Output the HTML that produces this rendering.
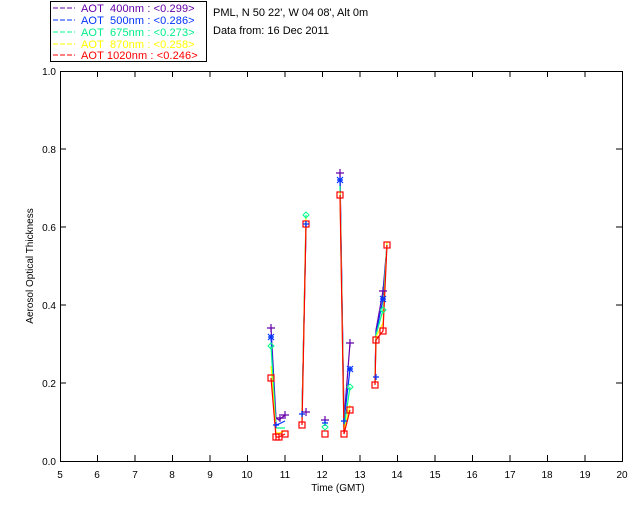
<!DOCTYPE html>
<html><head><style>
body{margin:0;background:#fff;width:640px;height:512px;overflow:hidden}
svg text{font-family:"Liberation Sans",sans-serif;font-size:11px}
</style></head><body>
<svg width="640" height="512" xmlns="http://www.w3.org/2000/svg">
<rect x="50.5" y="1.5" width="156" height="60" fill="none" stroke="#000"/>
<g stroke-dasharray="5,2" stroke-width="1">
<line x1="53" y1="8" x2="75" y2="8" stroke="#6600aa"/>
<line x1="53" y1="20" x2="75" y2="20" stroke="#0033ff"/>
<line x1="53" y1="32" x2="75" y2="32" stroke="#00ff88"/>
<line x1="53" y1="44" x2="75" y2="44" stroke="#ffff00"/>
<line x1="53" y1="55" x2="75" y2="55" stroke="#ff0000"/>
</g>
<g style="letter-spacing:0.1px">
<text x="81" y="12" fill="#6600aa" xml:space="preserve">AOT  400nm : &lt;0.299&gt;</text>
<text x="81" y="24" fill="#0033ff" xml:space="preserve">AOT  500nm : &lt;0.286&gt;</text>
<text x="81" y="36" fill="#00ee88" xml:space="preserve">AOT  675nm : &lt;0.273&gt;</text>
<text x="81" y="48" fill="#ffff00" xml:space="preserve">AOT  870nm : &lt;0.258&gt;</text>
<text x="81" y="59" fill="#ff0000" xml:space="preserve">AOT 1020nm : &lt;0.246&gt;</text>
</g>
<text x="213" y="16" fill="#000">PML, N 50 22', W 04 08', Alt 0m</text>
<text x="213" y="34" fill="#000">Data from: 16 Dec 2011</text>
<rect x="60.5" y="71.5" width="562" height="390" fill="none" stroke="#000"/>
<g stroke="#000">
<line x1="97.5" y1="71" x2="97.5" y2="77"/><line x1="97.5" y1="461" x2="97.5" y2="455"/>
<line x1="135" y1="71" x2="135" y2="77"/><line x1="135" y1="461" x2="135" y2="455"/>
<line x1="172.5" y1="71" x2="172.5" y2="77"/><line x1="172.5" y1="461" x2="172.5" y2="455"/>
<line x1="210" y1="71" x2="210" y2="77"/><line x1="210" y1="461" x2="210" y2="455"/>
<line x1="247.5" y1="71" x2="247.5" y2="77"/><line x1="247.5" y1="461" x2="247.5" y2="455"/>
<line x1="285" y1="71" x2="285" y2="77"/><line x1="285" y1="461" x2="285" y2="455"/>
<line x1="322.5" y1="71" x2="322.5" y2="77"/><line x1="322.5" y1="461" x2="322.5" y2="455"/>
<line x1="360" y1="71" x2="360" y2="77"/><line x1="360" y1="461" x2="360" y2="455"/>
<line x1="397.5" y1="71" x2="397.5" y2="77"/><line x1="397.5" y1="461" x2="397.5" y2="455"/>
<line x1="435" y1="71" x2="435" y2="77"/><line x1="435" y1="461" x2="435" y2="455"/>
<line x1="472.5" y1="71" x2="472.5" y2="77"/><line x1="472.5" y1="461" x2="472.5" y2="455"/>
<line x1="510" y1="71" x2="510" y2="77"/><line x1="510" y1="461" x2="510" y2="455"/>
<line x1="547.5" y1="71" x2="547.5" y2="77"/><line x1="547.5" y1="461" x2="547.5" y2="455"/>
<line x1="585" y1="71" x2="585" y2="77"/><line x1="585" y1="461" x2="585" y2="455"/>
<line x1="60" y1="383" x2="66" y2="383"/><line x1="622" y1="383" x2="616" y2="383"/>
<line x1="60" y1="305" x2="66" y2="305"/><line x1="622" y1="305" x2="616" y2="305"/>
<line x1="60" y1="227" x2="66" y2="227"/><line x1="622" y1="227" x2="616" y2="227"/>
<line x1="60" y1="149" x2="66" y2="149"/><line x1="622" y1="149" x2="616" y2="149"/>
</g>
<g text-anchor="end" fill="#000">
<text x="56" y="465" style="font-size:10px">0.0</text>
<text x="56" y="387" style="font-size:10px">0.2</text>
<text x="56" y="309" style="font-size:10px">0.4</text>
<text x="56" y="231" style="font-size:10px">0.6</text>
<text x="56" y="153" style="font-size:10px">0.8</text>
<text x="56" y="75" style="font-size:10px">1.0</text>
</g>
<g text-anchor="middle" fill="#000">
<text x="60" y="478" style="font-size:10px">5</text><text x="97" y="478" style="font-size:10px">6</text>
<text x="135" y="478" style="font-size:10px">7</text><text x="172" y="478" style="font-size:10px">8</text>
<text x="210" y="478" style="font-size:10px">9</text><text x="247" y="478" style="font-size:10px">10</text>
<text x="285" y="478" style="font-size:10px">11</text><text x="322" y="478" style="font-size:10px">12</text>
<text x="360" y="478" style="font-size:10px">13</text><text x="397" y="478" style="font-size:10px">14</text>
<text x="435" y="478" style="font-size:10px">15</text><text x="472" y="478" style="font-size:10px">16</text>
<text x="510" y="478" style="font-size:10px">17</text><text x="547" y="478" style="font-size:10px">18</text>
<text x="585" y="478" style="font-size:10px">19</text><text x="622" y="478" style="font-size:10px">20</text>
<text x="338" y="491" style="font-size:10px">Time (GMT)</text>
<text transform="translate(33,266) rotate(-90)" style="font-size:10px">Aerosol Optical Thickness</text>
</g>
<g fill="none" stroke-width="1.2">
<g stroke="#6600aa">
<polyline points="271,328 276,418 279,420 285,415"/><polyline points="302,412 306,228"/>
<polyline points="340,173 344,420 350,343"/><polyline points="375,377 376,330 383,291 387,245"/>
</g>
<g stroke="#0033ff">
<polyline points="271,337 276,425 279,424 285,421"/><polyline points="302,414 306,224"/>
<polyline points="340,180 344,421 350,369"/><polyline points="375,380 376,334 383,299 387,245"/>
</g>
<g stroke="#00ff88">
<polyline points="271,346 276,428 279,428 285,428"/><polyline points="302,418 306,215"/>
<polyline points="340,186 344,428 350,387"/><polyline points="375,382 376,335 383,310 387,243"/>
</g>
<g stroke="#ffff00">
<polyline points="271,366 276,433 279,433 285,431"/><polyline points="302,421 306,217"/>
<polyline points="340,192 344,431 350,405"/><polyline points="375,384 376,337 383,323 387,242"/>
</g>
<g stroke="#ff0000">
<polyline points="271,378 276,437 279,437 285,434"/><polyline points="302,425 306,224"/>
<polyline points="340,195 344,434 350,410"/><polyline points="375,385 376,340 383,331 387,245"/>
</g>
</g>
<g fill="none" stroke="#ff0000" stroke-width="1.2">
<rect x="268" y="375" width="6" height="6"/><rect x="273" y="434" width="6" height="6"/><rect x="276" y="434" width="6" height="6"/>
<rect x="282" y="431" width="6" height="6"/><rect x="299" y="422" width="6" height="6"/><rect x="303" y="221" width="6" height="6"/>
<rect x="322" y="431" width="6" height="6"/><rect x="337" y="192" width="6" height="6"/><rect x="341" y="431" width="6" height="6"/>
<rect x="347" y="407" width="6" height="6"/><rect x="372" y="382" width="6" height="6"/><rect x="373" y="337" width="6" height="6"/>
<rect x="380" y="328" width="6" height="6"/><rect x="384" y="242" width="6" height="6"/>
</g>
<g stroke="#6600aa" stroke-width="1.2">
<path d="M267,328h8M271,324v8M302,412h8M306,408v8M336,173h8M340,169v8M346,343h8M350,339v8M379,291h8M383,287v8M281,415h8M285,411v8M321,420h8M325,416v8M276,418h8M280,414v8"/>
</g>
<g stroke="#0033ff" stroke-width="1.2">
<path d="M268,337h6M271,334v6M268,334l6,6M274,334l-6,6M303,224h6M306,221v6M337,180h6M340,177v6M337,177l6,6M343,177l-6,6M347,369h6M350,366v6M347,366l6,6M353,366l-6,6M380,299h6M383,296v6M380,296l6,6M386,296l-6,6M273,425h6M276,422v6M373,377h6M376,374v6M299,414h6M302,411v6M322,423h6M325,420v6M341,421h6M344,418v6"/>
</g>
<g stroke="#00ff88" stroke-width="1" fill="none">
<path d="M271,343l3,3-3,3-3-3zM306,212l3,3-3,3-3-3zM350,384l3,3-3,3-3-3zM383,307l3,3-3,3-3-3zM325,424l3,3-3,3-3-3z"/>
</g>
</svg>
</body></html>
